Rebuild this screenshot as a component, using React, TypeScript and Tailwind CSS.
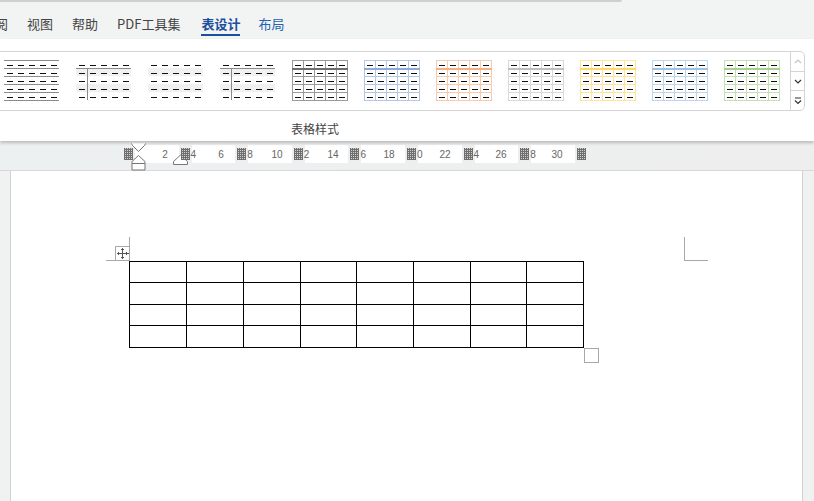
import React from 'react';

const font = { fontFamily: '"Noto Sans CJK SC", "Liberation Sans", sans-serif' };

type ThumbKind = 'rules' | 'band' | 'plain' | 'grid';

// one thumbnail of the table style gallery, drawn on a 56x41 grid
const StyleThumb = ({ kind, color, head }: { kind: ThumbKind; color?: string; head?: string }) => {
    const xs = [0, 11, 22, 33, 44];
    const ys = [0, 8, 16, 24, 32];
    return (
        <svg width="56" height="42" viewBox="0 0 56 42" className="shrink-0" shapeRendering="crispEdges">
            {(kind === 'band' || kind === 'plain') && [8, 24].map(y => (
                <rect key={y} x="0" y={y} width="55" height="8" fill="#f1f1f1" />
            ))}
            {kind === 'rules' && [0, 8, 16, 24, 32, 40].map(y => (
                <rect key={y} x="0" y={y} width="55" height="1" fill="#8a8a8a" />
            ))}
            {kind === 'band' && <rect x="0" y="8" width="55" height="1" fill="#8a8a8a" />}
            {kind === 'band' && <rect x="11" y="8" width="1" height="32" fill="#8a8a8a" />}
            {kind === 'grid' && (
                <>
                    <rect x="0.5" y="0.5" width="55" height="40" fill="#fff" stroke={color} />
                    {[11, 22, 33, 44].map(x => <rect key={x} x={x} y="0" width="1" height="41" fill={color} />)}
                    {[16, 24, 32].map(y => <rect key={y} x="0" y={y} width="56" height="1" fill={color} />)}
                    <rect x="0" y="8" width="56" height="2" fill={head} />
                </>
            )}
            {ys.map(y => xs.map(x => (
                <rect key={`${x}-${y}`} x={x + 3} y={y + 5} width="6" height="1" fill="#111" />
            )))}
        </svg>
    );
};

const gallery: { kind: ThumbKind; color?: string; head?: string }[] = [
    { kind: 'rules' },
    { kind: 'band' },
    { kind: 'plain' },
    { kind: 'band' },
    { kind: 'grid', color: '#9a9a9a', head: '#6e6e6e' },
    { kind: 'grid', color: '#b4c7e7', head: '#8eaadb' },
    { kind: 'grid', color: '#f8cbad', head: '#f4b083' },
    { kind: 'grid', color: '#d9d9d9', head: '#bfbfbf' },
    { kind: 'grid', color: '#ffe599', head: '#ffd966' },
    { kind: 'grid', color: '#bdd6ee', head: '#9cc2e5' },
    { kind: 'grid', color: '#c5e0b3', head: '#a8d08d' },
];

const rulerCells = [['', '2'], ['4', '6'], ['8', '10'], ['2', '14'], ['6', '18'], ['0', '22'], ['4', '26'], ['8', '30']];

// the rows and columns of the page's table are not all the same pixel size
const rowHeights = ['h-[21px]', 'h-[22px]', 'h-[21px]', 'h-[22px]'];
const colWidths = ['w-[57px]', 'w-[57px]', 'w-[57px]', 'w-[56px]', 'w-[57px]', 'w-[57px]', 'w-[56px]', 'w-[57px]'];

// hatch block that covers the ruler's odd ticks
const RulerBlock = () => (
    <div className="relative z-10 w-[9px] h-[12px] shrink-0 bg-[conic-gradient(#cfcfcf_0_25%,#6f6f6f_0)] bg-[length:2px_2px]" />
);

export default function App() {
    return (
        <div className="w-[814px] h-[501px] overflow-hidden bg-[#f0f1f1] flex flex-col" style={font}>
            {/* tabs */}
            <div className="relative h-[39px] shrink-0 bg-[#f2f3f3] flex items-start text-[13px] text-[#444] pt-[14px]">
                <div className="absolute left-0 top-0 w-[622px] h-[2px] bg-[#cfcfcf] rounded-br-sm" />
                <span className="w-[8px] overflow-hidden whitespace-nowrap flex justify-end leading-[19px]"><span>阅</span></span>
                <span className="ml-[19px] leading-[19px]">视图</span>
                <span className="ml-[19px] leading-[19px]">帮助</span>
                <span className="ml-[19px] leading-[19px]">PDF工具集</span>
                <span className="ml-[21px] leading-[19px] font-bold text-[#1c4f9c] border-b-[2px] border-[#1c4f9c] h-[22px]">表设计</span>
                <span className="ml-[18px] leading-[19px] text-[#2563b0]">布局</span>
            </div>
            {/* ribbon */}
            <div className="h-[102px] shrink-0 bg-white shadow-[0_2px_3px_rgba(0,0,0,0.22)] z-10 flex flex-col">
                <div className="mt-[12px] ml-[-1px] w-[806px] h-[60px] border border-[#d4d4d4] rounded-r-[5px] flex">
                    <div className="flex-1 flex items-center pl-[4px] gap-[16px] overflow-hidden">
                        {gallery.map((g, i) => <StyleThumb key={i} {...g} />)}
                    </div>
                    <div className="w-[14px] border-l border-[#d4d4d4] flex flex-col text-[#333]">
                        <div className="h-[20px] border-b border-[#d4d4d4] flex items-center justify-center">
                            <svg width="8" height="5" viewBox="0 0 8 5" fill="none" stroke="#c4c4c4" strokeWidth="1.2"><path d="M1 4l3-3 3 3" /></svg>
                        </div>
                        <div className="h-[19px] border-b border-[#d4d4d4] flex items-center justify-center">
                            <svg width="8" height="5" viewBox="0 0 8 5" fill="none" stroke="#333" strokeWidth="1.2"><path d="M1 1l3 3 3-3" /></svg>
                        </div>
                        <div className="flex-1 flex items-center justify-center">
                            <svg width="8" height="8" viewBox="0 0 8 8" fill="none" stroke="#333" strokeWidth="1.2"><path d="M1 1h6M1 3.5l3 3 3-3" /></svg>
                        </div>
                    </div>
                </div>
                <div className="text-[12px] text-[#444] leading-[16px] mt-[10px] ml-[291px]">表格样式</div>
            </div>
            {/* ruler */}
            <div className="relative h-[30px] shrink-0 bg-gradient-to-r from-[#edf0f1] to-[#eeeeee] border-b border-[#d8d8d8] flex items-start pl-[124px] pt-[4px]">
                <div className="flex items-center gap-[2px] text-[10px] text-[#666] h-[18px]" style={{ fontFamily: '"Liberation Sans", sans-serif' }}>
                    {rulerCells.map(([odd, even], i) => (
                        <React.Fragment key={i}>
                            <RulerBlock />
                            <div className="w-[43.6px] h-[18px] bg-white flex items-center shrink-0">
                                <span className="w-[8px] -ml-[1px] shrink-0">{odd}</span>
                                {/* the numbers run at 56px while the blocks run at 56.6px */}
                                <span className="text-center shrink-0" style={{ width: 46 - 1.2 * i }}>{even}</span>
                            </div>
                        </React.Fragment>
                    ))}
                    <RulerBlock />
                </div>
                {/* indent markers */}
                <svg className="absolute z-20 left-[131px] top-[2px]" width="15" height="28" viewBox="0 0 15 28" fill="#fff" stroke="#777">
                    <path d="M0.5 0.5h14v2l-7 6-7-6z" stroke="none" />
                    <path d="M0.5 0.5l1 2 6 6 6-6 1-2" fill="none" />
                    <path d="M7.5 12.5l6.5 6v2h-13v-2z" />
                    <path d="M1 20.5h13v6.5h-13z" />
                </svg>
                <svg className="absolute left-[173px] top-[13px]" width="15" height="11" viewBox="0 0 15 11" fill="#fff" stroke="#777">
                    <path d="M0.5 10.5v-3l7-6.5 7 6.5v3z" />
                </svg>
            </div>
            {/* page */}
            <div className="flex-1 ml-[10px] mr-[11px] bg-white border-x border-[#d0d0d0] relative">
                <div className="pl-[118px] pt-[90px]">
                    <table className="border-collapse border-[1.5px] border-black table-fixed">
                        <tbody>
                            {rowHeights.map((h, r) => (
                                <tr key={r} className={h}>
                                    {colWidths.map((w, c) => <td key={c} className={`border border-black p-0 ${w}`} />)}
                                </tr>
                            ))}
                        </tbody>
                    </table>
                </div>
                {/* crop marks, move handle and resize handle sit over the page */}
                <div className="absolute left-[95px] top-[66px] w-[24px] h-[24px] border-r border-b border-[#a8a8a8]" />
                <div className="absolute left-[104px] top-[75px] w-[15px] h-[15px] border border-[#a8a8a8] bg-white flex items-center justify-center">
                    <svg width="13" height="13" viewBox="0 0 13 13" fill="#555" stroke="#555" strokeWidth="1" shapeRendering="crispEdges">
                        <path d="M6.5 2v9M2 6.5h9" fill="none" />
                        <path d="M6.5 0.5L8.5 3h-4zM6.5 12.5L4.5 10h4zM0.5 6.5L3 4.5v4zM12.5 6.5L10 8.5v-4z" stroke="none" />
                    </svg>
                </div>
                <div className="absolute left-[673px] top-[66px] w-[24px] h-[24px] border-l border-b border-[#a8a8a8]" />
                <div className="absolute left-[573px] top-[177px] w-[15px] h-[15px] border border-[#a8a8a8] bg-white" />
            </div>
        </div>
    );
}
